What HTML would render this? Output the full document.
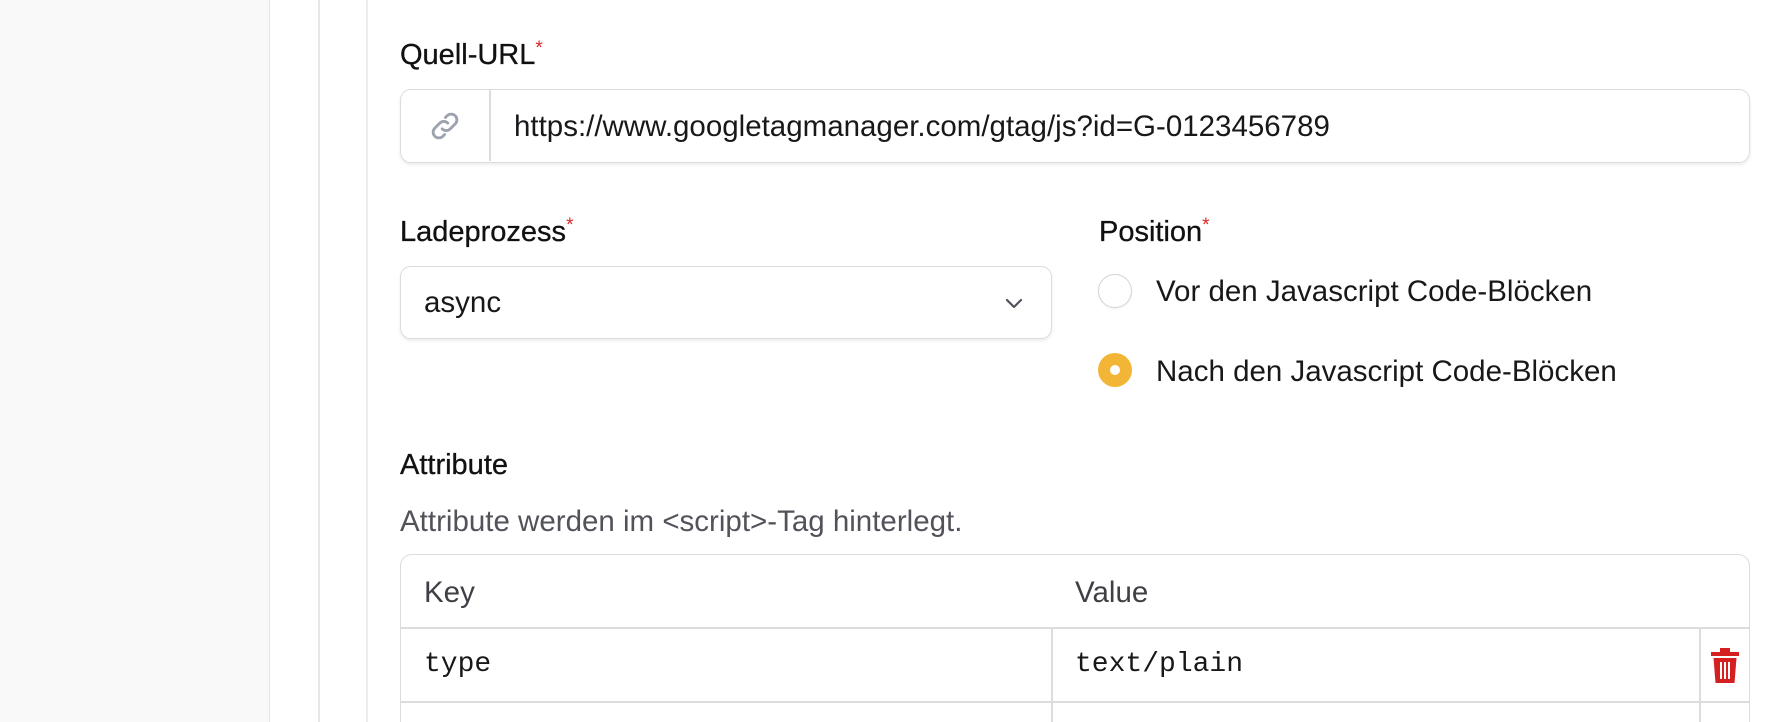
<!DOCTYPE html>
<html><head><style>
*{box-sizing:border-box;margin:0;padding:0}
html,body{width:1780px;height:722px;overflow:hidden}
body{background:#fff;font-family:"Liberation Sans",sans-serif;color:#18181b;position:relative}
.abs{position:absolute}
.lbl{font-size:29px;line-height:32px;color:#111;-webkit-text-stroke:0.3px #111}
.lbl sup{color:#dc2626;font-size:19px;vertical-align:top;position:relative;top:-6px;-webkit-text-stroke:0}
.box{border:1.5px solid #dcdcde;border-radius:11px;box-shadow:0 2px 3px rgba(0,0,0,.08);background:#fff}
.t{font-size:29.5px;line-height:34px}
.mono{font-family:"Liberation Mono",monospace;font-size:28px;line-height:34px}
</style></head><body>
<div class="abs" style="left:0;top:0;width:270px;height:722px;background:#f9f9f9;border-right:1.5px solid #e4e4e7"></div>
<div class="abs" style="left:318px;top:0;width:1.5px;height:722px;background:#e8e8ea"></div>
<div class="abs" style="left:366px;top:0;width:1.5px;height:722px;background:#ededef"></div>

<div class="abs lbl" style="left:400px;top:39px">Quell-URL<sup>*</sup></div>
<div class="abs box" style="left:400px;top:89px;width:1350px;height:74px">
  <div class="abs" style="left:88px;top:0;width:1.5px;height:71px;background:#dcdcde"></div>
  <svg class="abs" style="left:27px;top:19px" width="34" height="34" viewBox="0 0 24 24" fill="none" stroke="#9ca3af" stroke-width="2" stroke-linecap="round"><path d="M10 14a4 4 0 0 0 5.7 0l3.5-3.5a4 4 0 0 0-5.7-5.7l-1.2 1.2"/><path d="M14 10a4 4 0 0 0-5.7 0l-3.5 3.5a4 4 0 0 0 5.7 5.7l1.2-1.2"/></svg>
  <div class="abs t" style="left:113px;top:20px">https://www.googletagmanager.com/gtag/js?id=G-0123456789</div>
</div>

<div class="abs lbl" style="left:400px;top:216px">Ladeprozess<sup>*</sup></div>
<div class="abs box" style="left:400px;top:266px;width:652px;height:73px">
  <div class="abs t" style="left:23px;top:19px">async</div>
  <svg class="abs" style="left:601px;top:24px" width="24" height="24" viewBox="0 0 24 24" fill="none" stroke="#52525b" stroke-width="2.2" stroke-linecap="round" stroke-linejoin="round"><path d="M5 9l7 7 7-7"/></svg>
</div>

<div class="abs lbl" style="left:1099px;top:216px">Position<sup>*</sup></div>
<div class="abs" style="left:1098px;top:274px;width:34px;height:34px;border-radius:50%;border:1.5px solid #d4d4d8;background:#fff;box-shadow:0 1px 2px rgba(0,0,0,.06)"></div>
<div class="abs t" style="left:1156px;top:275px">Vor den Javascript Code-Blöcken</div>
<div class="abs" style="left:1098px;top:353px;width:34px;height:34px;border-radius:50%;background:#f2b535"></div>
<div class="abs" style="left:1110px;top:365px;width:10px;height:10px;border-radius:50%;background:#fff"></div>
<div class="abs t" style="left:1156px;top:355px">Nach den Javascript Code-Blöcken</div>

<div class="abs lbl" style="left:400px;top:449px">Attribute</div>
<div class="abs t" style="left:400px;top:505px;color:#52525b">Attribute werden im &lt;script&gt;-Tag hinterlegt.</div>

<div class="abs" style="left:400px;top:554px;width:1350px;height:200px;border:1.5px solid #dcdcde;border-radius:12px;background:#fff">
  <div class="abs t" style="left:23px;top:21px;color:#3f3f46">Key</div>
  <div class="abs t" style="left:674px;top:21px;color:#3f3f46">Value</div>
  <div class="abs" style="left:0;top:72px;width:1348px;height:1.5px;background:#dcdcde"></div>
  <div class="abs" style="left:0;top:146px;width:1348px;height:1.5px;background:#dcdcde"></div>
  <div class="abs" style="left:650px;top:72px;width:1.5px;height:130px;background:#dcdcde"></div>
  <div class="abs" style="left:1298px;top:72px;width:1.5px;height:130px;background:#dcdcde"></div>
  <div class="abs mono" style="left:23px;top:93px">type</div>
  <div class="abs mono" style="left:674px;top:93px">text/plain</div>
  <svg class="abs" style="left:1309px;top:92px" width="30" height="38" viewBox="0 0 30 38"><path d="M10 1h10v4h9v4H1V5h9z M3.5 11h23l-2 25h-19z" fill="#d42020"/><path d="M11 15v17M15 15v17M19 15v17" stroke="#fff" stroke-width="2"/></svg>
  <svg class="abs" style="left:1309px;top:166px" width="30" height="36" viewBox="0 0 30 36"><path d="M10 1h10v4h9v4H1V5h9z" fill="#d42020"/></svg>
</div>
</body></html>
